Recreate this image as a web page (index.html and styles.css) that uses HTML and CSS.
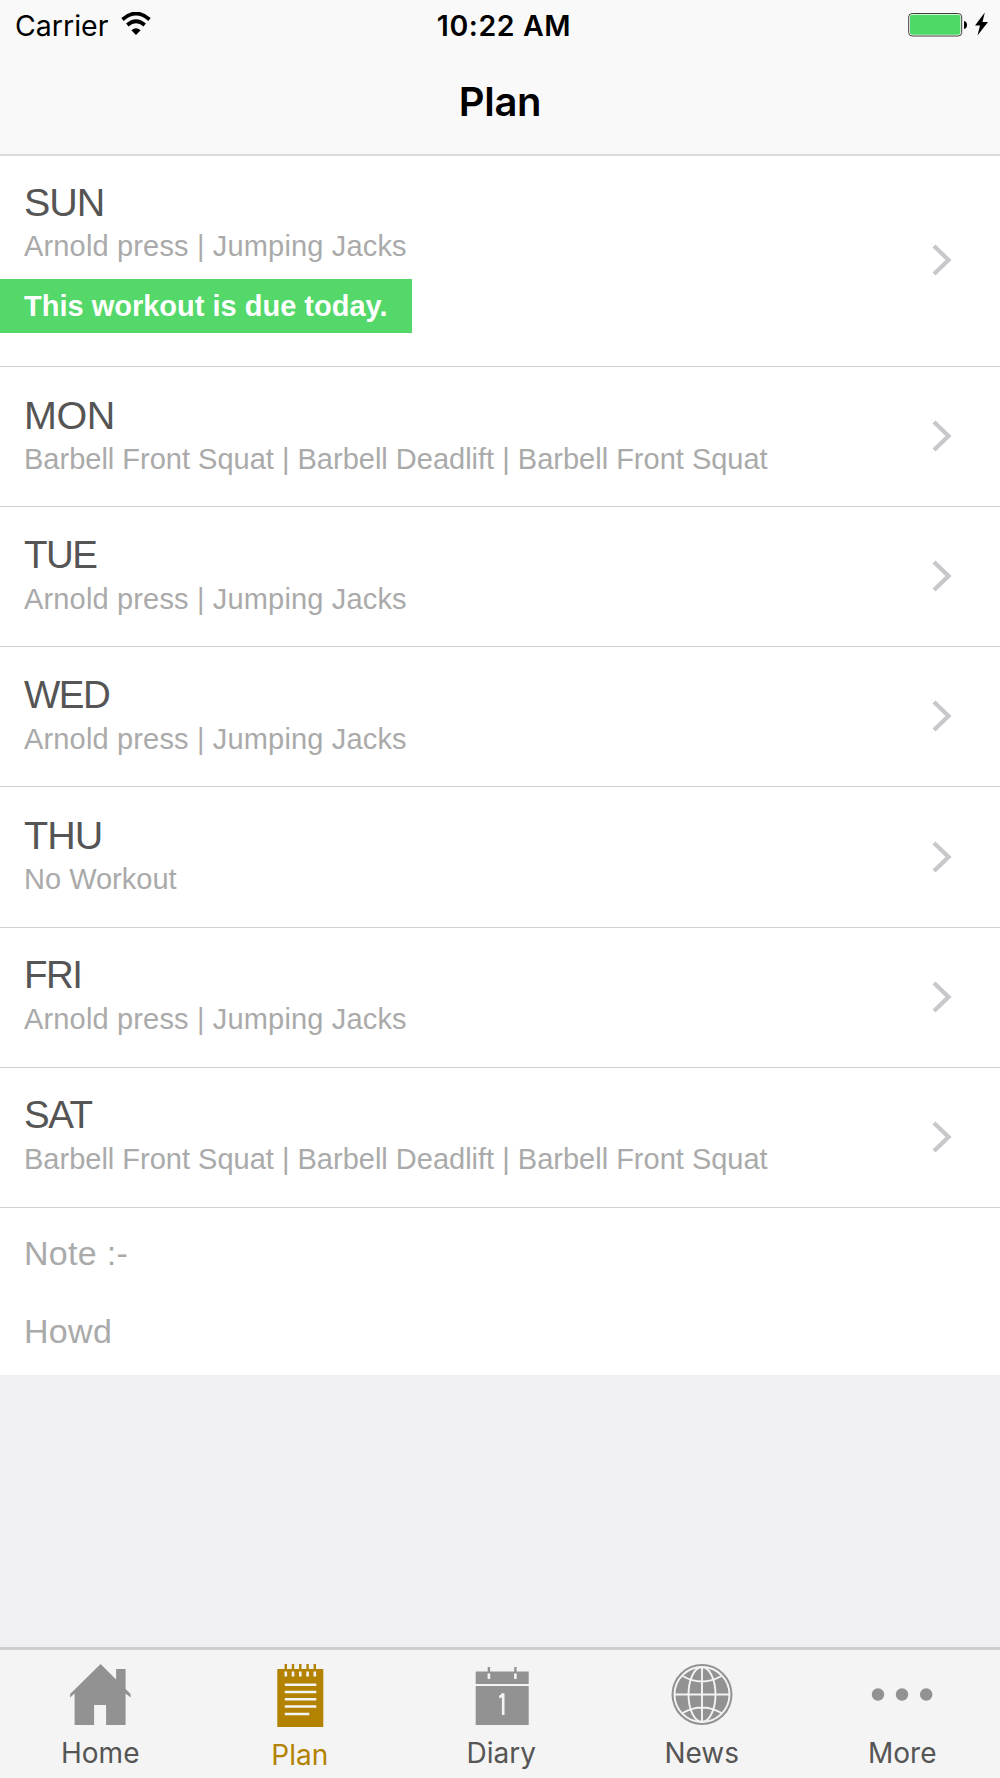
FILE: index.html
```html
<!DOCTYPE html>
<html lang="en">

<head>
    <meta charset="UTF-8">
    <meta name="viewport" content="width=device-width, initial-scale=1.0">
    <title>Plan</title>
    <link rel="stylesheet" href="styles.css">
</head>

<body>
    <header>
        <div class="status_bar">
            <div class="status_left">
                <span class="carrier">Carrier</span>
                <svg class="wifi" width="30" height="24" viewBox="0 0 30 24">
                    <path d="M1.500 7.500Q15-4.500 28.500 7.500M6.300 13Q15 5.500 23.700 13" fill="none" stroke="#000" stroke-width="3.700" />
                    <path d="M15 23L10.400 18.300Q15 14.300 19.600 18.300Z" />
                </svg>
            </div>
            <div class="time">10:22 AM</div>
            <div class="status_right">
                <svg width="80" height="26" viewBox="0 0 80 26">
                    <rect x="0.700" y="1.500" width="53" height="22.500" rx="3.500" fill="#fff" stroke="#3c3c3c" />
                    <rect x="2" y="2.800" width="50.400" height="20" rx="2.300" fill="#4cd964" />
                    <path d="M56 9Q59 9.500 59 13T56 17Z" />
                    <path d="M76.800 0.500L67 13.500H72L69.500 23.500L80 10H74.500Z" />
                </svg>
            </div>
        </div>
        <h1>Plan</h1>
    </header>

    <main>
        <ul class="days">
            <li class="day today">
                <div class="info">
                    <h2>SUN</h2>
                    <p class="short">Arnold press | Jumping Jacks</p>
                    <span class="due">This workout is due today.</span>
                </div>
                <svg class="arrow" width="20" height="32" viewBox="0 0 20 32"><path d="M2 2L16.500 16L2 30" /></svg>
            </li>
            <li class="day">
                <div class="info">
                    <h2 class="wide">MON</h2>
                    <p>Barbell Front Squat | Barbell Deadlift | Barbell Front Squat</p>
                </div>
                <svg class="arrow" width="20" height="32" viewBox="0 0 20 32"><path d="M2 2L16.500 16L2 30" /></svg>
            </li>
            <li class="day">
                <div class="info">
                    <h2 class="tight">TUE</h2>
                    <p class="short">Arnold press | Jumping Jacks</p>
                </div>
                <svg class="arrow" width="20" height="32" viewBox="0 0 20 32"><path d="M2 2L16.500 16L2 30" /></svg>
            </li>
            <li class="day">
                <div class="info">
                    <h2 class="tight">WED</h2>
                    <p class="short">Arnold press | Jumping Jacks</p>
                </div>
                <svg class="arrow" width="20" height="32" viewBox="0 0 20 32"><path d="M2 2L16.500 16L2 30" /></svg>
            </li>
            <li class="day">
                <div class="info">
                    <h2>THU</h2>
                    <p>No Workout</p>
                </div>
                <svg class="arrow" width="20" height="32" viewBox="0 0 20 32"><path d="M2 2L16.500 16L2 30" /></svg>
            </li>
            <li class="day">
                <div class="info">
                    <h2 class="tight">FRI</h2>
                    <p class="short">Arnold press | Jumping Jacks</p>
                </div>
                <svg class="arrow" width="20" height="32" viewBox="0 0 20 32"><path d="M2 2L16.500 16L2 30" /></svg>
            </li>
            <li class="day">
                <div class="info">
                    <h2 class="tight">SAT</h2>
                    <p>Barbell Front Squat | Barbell Deadlift | Barbell Front Squat</p>
                </div>
                <svg class="arrow" width="20" height="32" viewBox="0 0 20 32"><path d="M2 2L16.500 16L2 30" /></svg>
            </li>
        </ul>
        <div class="note">
            <p>Note :-</p>
            <p>Howd</p>
        </div>
    </main>

    <nav>
        <a class="tab">
            <svg width="62" height="64" viewBox="-0.600 0 62 64">
                <path d="M31 0L46.500 15.500V5H56V25L61 30V33.500L56 29.500V61H36.500V41H24.500V61H5V29.500L0.500 33.500V30Z" />
            </svg>
            <span>Home</span>
        </a>
        <a class="tab active">
            <svg width="48" height="64" viewBox="0.700 0 48 64">
                <path d="M1 5H47V63H1Z" />
                <path d="M9.500 0V6M16.700 0V6M24 0V6M31.300 0V6M38.500 0V6" stroke="#b38200" stroke-width="2.400" />
                <path d="M9.500 7.500V12.500M16.700 7.500V12.500M24 7.500V12.500M31.300 7.500V12.500M38.500 7.500V12.500" stroke="#f4f4f4" stroke-width="2.600" />
                <path d="M8.500 20.700H40M8.500 28H40M8.500 35.300H40M8.500 42.500H40M8.500 50H33" stroke="#f4f4f4" stroke-width="2.600" />
            </svg>
            <span>Plan</span>
        </a>
        <a class="tab">
            <svg width="54" height="64" viewBox="-1.700 0 54 64">
                <path d="M0 7.500H53V20H0ZM0 22H53V61H0Z" />
                <path d="M13.200 3V8M39.700 3V8" stroke="#929292" stroke-width="2.400" />
                <path d="M13.200 9.500V15M39.700 9.500V15M23.500 33Q26.500 32.500 27.500 29.500V51" fill="none" stroke="#f4f4f4" stroke-width="2.600" />
            </svg>
            <span>Diary</span>
        </a>
        <a class="tab">
            <svg width="62" height="64" viewBox="0 0 62 64">
                <circle cx="31" cy="30.500" r="30.500" />
                <g fill="none" stroke="#f4f4f4" stroke-width="1.900">
                    <circle cx="31" cy="30.500" r="27.500" />
                    <ellipse cx="31" cy="30.500" rx="13.500" ry="27.500" />
                    <path d="M31 3V58M3.500 30.500H58.500M11.500 12Q31 23 50.500 12M11.500 49Q31 38 50.500 49" />
                </g>
            </svg>
            <span>News</span>
        </a>
        <a class="tab">
            <svg width="62" height="64" viewBox="0 0 62 64">
                <circle cx="7" cy="30.500" r="6.200" />
                <circle cx="31" cy="30.500" r="6.200" />
                <circle cx="55.200" cy="30.500" r="6.200" />
            </svg>
            <span>More</span>
        </a>
    </nav>
</body>

</html>
```
FILE: styles.css
```css
* {
    box-sizing: border-box;
}

body {
    margin: 0;
    height: 1778px;
    display: flex;
    flex-direction: column;
    background-color: #efeff4;
    font-family: "Liberation Sans", Arial, sans-serif;
}

h1,
h2,
p,
ul {
    margin: 0;
    padding: 0;
    font-weight: normal;
}

header {
    height: 156px;
    background-color: #f9f9f9;
    border-bottom: 2px solid #dbdbdc;
    font-family: Inter, sans-serif;
}

.status_bar {
    display: grid;
    grid-template-columns: 1fr auto 1fr;
    height: 50px;
    padding: 0 12px 0 15px;
    font-size: 28.500px;
    line-height: 52px;
}

.status_left {
    display: flex;
}

.carrier {
    width: 106px;
}

.wifi {
    margin-top: 12px;
}

.time {
    padding-left: 5px;
    font-weight: 600;
    letter-spacing: 0.600px;
}

.status_right {
    display: flex;
    justify-content: flex-end;
    padding-top: 12px;
}

h1 {
    margin-top: 26px;
    font-size: 40px;
    font-weight: 600;
    line-height: 52px;
    text-align: center;
    letter-spacing: -0.300px;
}

.days {
    list-style: none;
    background-color: white;
}

.day {
    display: flex;
    justify-content: space-between;
    height: 140.150px;
    padding: 25.600px 48px 0 24px;
    border-bottom: 1px solid #d0d0d3;
}

.today {
    height: 211px;
    padding-top: 24px;
}

.day h2 {
    font-size: 39.500px;
    line-height: 44px;
    color: #555;
    letter-spacing: -1px;
}

.day .wide {
    letter-spacing: -0.500px;
}

.day .tight {
    font-size: 38.500px;
    letter-spacing: -1.500px;
}

.day p {
    margin-top: 4px;
    font-size: 29px;
    line-height: 36px;
    color: #aaa;
}

.day .short {
    letter-spacing: 0.160px;
}

.due {
    display: block;
    width: 412px;
    height: 54px;
    margin: 15px 0 0 -24px;
    padding-left: 24px;
    background-color: #54d86a;
    color: white;
    font-size: 29px;
    font-weight: bold;
    line-height: 54px;
}

.arrow {
    margin-top: 27.500px;
    fill: none;
    stroke: #c7c7cc;
    stroke-width: 4.300px;
}

.today .arrow {
    margin-top: 64px;
}

.note {
    height: 167px;
    padding: 19px 24px;
    background-color: white;
    color: #aaa;
    font-size: 34px;
    letter-spacing: 0.300px;
}

.note p {
    line-height: 52px;
    margin-bottom: 26px;
}

nav {
    display: flex;
    height: 131px;
    margin-top: auto;
    padding-top: 14px;
    background-color: #f4f4f4;
    border-top: 3px solid #cfcfd2;
    font-family: Inter, sans-serif;
    overflow: hidden;
}

.tab {
    flex: 0 0 200.500px;
    display: flex;
    flex-direction: column;
    align-items: center;
    color: #555;
    font-size: 28px;
    line-height: 36px;
}

.tab svg {
    fill: #929292;
    overflow: visible;
}

.tab span {
    margin-top: 7px;
}

.active {
    color: #b38200;
}

.tab.active svg {
    fill: #b38200;
}

.tab.active span {
    margin-top: 9px;
    margin-right: 2px;
}
```
